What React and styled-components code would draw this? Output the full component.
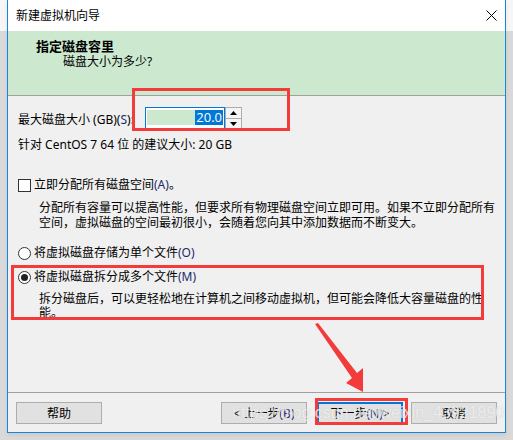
import React from "react";
import styled, { createGlobalStyle } from "styled-components";

const GlobalStyle = createGlobalStyle`
  body {
    margin: 0;
    font-family: "Noto Sans", "Noto Sans CJK SC", sans-serif;
    font-size: 12px;
    color: #000;
  }
`;

const Screen = styled.div`
  position: relative;
  width: 513px;
  height: 440px;
  overflow: hidden;
  background: linear-gradient(to bottom, #f6f6f6 0, #f6f6f6 31px, #d9d9d9 31px);
`;

const Window = styled.div`
  box-sizing: border-box;
  margin-left: 7px;
  width: 499px;
  height: 433px;
  border: 1px solid #1a84d8;
  border-top: none;
  background: #f0f0f0;
  display: flex;
  flex-direction: column;
  box-shadow: 0 2px 4px rgba(0, 0, 0, 0.08);
`;

const TitleBar = styled.div`
  height: 31px;
  flex: 0 0 31px;
  background: #fff;
  display: flex;
  align-items: center;
  justify-content: space-between;
  padding: 0 8px 0 8px;
  font-size: 12px;
  line-height: 16px;
`;

const Header = styled.div`
  flex: 0 0 56px;
  background: #cce8cf;
  border-bottom: 1px solid #a0a0a0;
  padding: 8px 0 0 28px;
  box-sizing: content-box;
  height: 48px;
`;

const HeaderTitle = styled.div`
  font-weight: bold;
  font-size: 13px;
  line-height: 15px;
`;

const HeaderSub = styled.div`
  margin-left: 27px;
  line-height: 15px;
`;

const Body = styled.div`
  flex: 1;
  padding: 11px 10px 0 10px;
`;

const SizeRow = styled.div`
  display: flex;
  align-items: center;
  height: 23px;
`;

const SizeLabel = styled.span`
  flex: 0 0 127px;
  white-space: nowrap;
`;

const Field = styled.div`
  box-sizing: border-box;
  width: 80px;
  height: 23px;
  border: 1px solid #0078d7;
  background: #fff;
  padding: 2px 1px;
`;

const FieldBand = styled.div`
  height: 15px;
  background: #cce8cf;
  display: flex;
  justify-content: flex-end;
  align-items: center;
`;

const Selected = styled.span`
  background: #0078d7;
  color: #fff;
  font-family: "Open Sans", "Noto Sans", sans-serif;
  font-size: 13px;
  line-height: 15px;
  padding: 0 1px;
`;

const Spinner = styled.div`
  box-sizing: border-box;
  width: 17px;
  height: 23px;
  border: 1px solid #adadad;
  display: flex;
  flex-direction: column;
  background: #f0f0f0;
`;

const SpinButton = styled.div`
  flex: 1;
  display: flex;
  align-items: center;
  justify-content: center;
  border-bottom: ${(p) => (p.$top ? "1px solid #adadad" : "none")};
  background: #f5f5f5;
`;

const Line = styled.div`
  line-height: 16px;
  margin-top: ${(p) => p.$mt || 0}px;
  white-space: nowrap;
`;

const OptionRow = styled.label`
  display: flex;
  align-items: center;
  gap: 3px;
  line-height: 16px;
  margin-top: ${(p) => p.$mt || 0}px;
  white-space: nowrap;
`;

const CheckBox = styled.span`
  box-sizing: border-box;
  width: 13px;
  height: 13px;
  border: 1px solid #333;
  background: #fff;
`;

const Radio = styled.span`
  box-sizing: border-box;
  width: 13px;
  height: 13px;
  border-radius: 50%;
  border: 1px solid #333;
  background: #fff;
  display: flex;
  align-items: center;
  justify-content: center;
  &::after {
    content: "";
    display: ${(p) => (p.$checked ? "block" : "none")};
    width: 7px;
    height: 7px;
    border-radius: 50%;
    background: #222;
  }
`;

const Key = styled.span`
  color: #1b2a6b;
`;

const Desc = styled.div`
  margin-left: 21px;
  margin-top: 7px;
  line-height: ${(p) => p.$lh || 15}px;
  white-space: nowrap;
`;

const Footer = styled.div`
  flex: 0 0 auto;
  border-top: 1px solid #a0a0a0;
  padding: 9px 8px 8px 8px;
  display: flex;
  align-items: center;
`;

const Button = styled.div`
  box-sizing: border-box;
  width: 86px;
  height: 22px;
  background: #e1e1e1;
  border: ${(p) => (p.$primary ? "2px solid #0078d7" : "1px solid #adadad")};
  display: flex;
  align-items: center;
  justify-content: center;
  font-size: 12px;
  margin-right: ${(p) => p.$mr || 0}px;
  white-space: nowrap;
`;

const Spacer = styled.div`
  flex: 1;
`;

const Mark = styled.div`
  position: absolute;
  left: ${(p) => p.$x}px;
  top: ${(p) => p.$y}px;
  width: ${(p) => p.$w}px;
  height: ${(p) => p.$h}px;
  box-sizing: border-box;
  border: 3px solid #f33b3b;
  pointer-events: none;
`;

const Arrow = styled.svg`
  position: absolute;
  left: 0;
  top: 0;
  pointer-events: none;
`;

const Watermark = styled.div`
  position: absolute;
  left: 232px;
  top: 403px;
  font-family: "Liberation Sans", Arial, sans-serif;
  font-size: 16px;
  line-height: 20px;
  color: rgba(255, 255, 255, 0.7);
  text-shadow: 0 0 1px rgba(150, 150, 150, 0.45);
  pointer-events: none;
  white-space: nowrap;
`;

const CloseIcon = () => (
  <svg width="11" height="11" viewBox="0 0 11 11">
    <path d="M0.5 0.5 L10.5 10.5 M10.5 0.5 L0.5 10.5" stroke="#000" strokeWidth="1" />
  </svg>
);

const Tri = ({ up }) => (
  <svg width="7" height="4" viewBox="0 0 7 4">
    <path d={up ? "M0 4 L3.5 0 L7 4 Z" : "M0 0 L7 0 L3.5 4 Z"} fill="#000" />
  </svg>
);

export default function App() {
  return (
    <>
      <GlobalStyle />
      <Screen>
        <Window>
          <TitleBar>
            <span>新建虚拟机向导</span>
            <CloseIcon />
          </TitleBar>
          <Header>
            <HeaderTitle>指定磁盘容里</HeaderTitle>
            <HeaderSub>磁盘大小为多少?</HeaderSub>
          </Header>
          <Body>
            <SizeRow>
              <SizeLabel>
                最大磁盘大小 (GB)(<Key>S</Key>):
              </SizeLabel>
              <Field>
                <FieldBand>
                  <Selected>20.0</Selected>
                </FieldBand>
              </Field>
              <Spinner>
                <SpinButton $top>
                  <Tri up />
                </SpinButton>
                <SpinButton>
                  <Tri />
                </SpinButton>
              </Spinner>
            </SizeRow>
            <Line $mt={7}>针对 CentOS 7 64 位 的建议大小: 20 GB</Line>

            <OptionRow $mt={24}>
              <CheckBox />
              <span>
                立即分配所有磁盘空间<Key>(A)</Key>。
              </span>
            </OptionRow>
            <Desc>
              分配所有容量可以提高性能，但要求所有物理磁盘空间立即可用。如果不立即分配所有
              <br />
              空间，虚拟磁盘的空间最初很小，会随着您向其中添加数据而不断变大。
            </Desc>

            <OptionRow $mt={15}>
              <Radio />
              <span>
                将虚拟磁盘存储为单个文件<Key>(O)</Key>
              </span>
            </OptionRow>
            <OptionRow $mt={8}>
              <Radio $checked />
              <span>
                将虚拟磁盘拆分成多个文件<Key>(M)</Key>
              </span>
            </OptionRow>
            <Desc $lh={14}>
              拆分磁盘后，可以更轻松地在计算机之间移动虚拟机，但可能会降低大容量磁盘的性
              <br />
              能。
            </Desc>
          </Body>
          <Footer>
            <Button>帮助</Button>
            <Spacer />
            <Button $mr={10}>
              &lt; 上一步<Key>(B)</Key>
            </Button>
            <Button $primary $mr={8}>
              下一步<Key>(N)</Key> &gt;
            </Button>
            <Button>取消</Button>
          </Footer>
        </Window>

        <Mark $x={132} $y={88} $w={158} $h={43} />
        <Mark $x={11} $y={265} $w={473} $h={55} />
        <Mark $x={315} $y={398} $w={93} $h={27} />
        <Arrow width="513" height="440" viewBox="0 0 513 440">
          <polygon
            points="315,324 318,323 357,373 363,368 363,392 346,383 352,378"
            fill="#f33b3b"
          />
        </Arrow>
        <Watermark>https://blog.csdn.net/weixin_43921890</Watermark>
      </Screen>
    </>
  );
}
